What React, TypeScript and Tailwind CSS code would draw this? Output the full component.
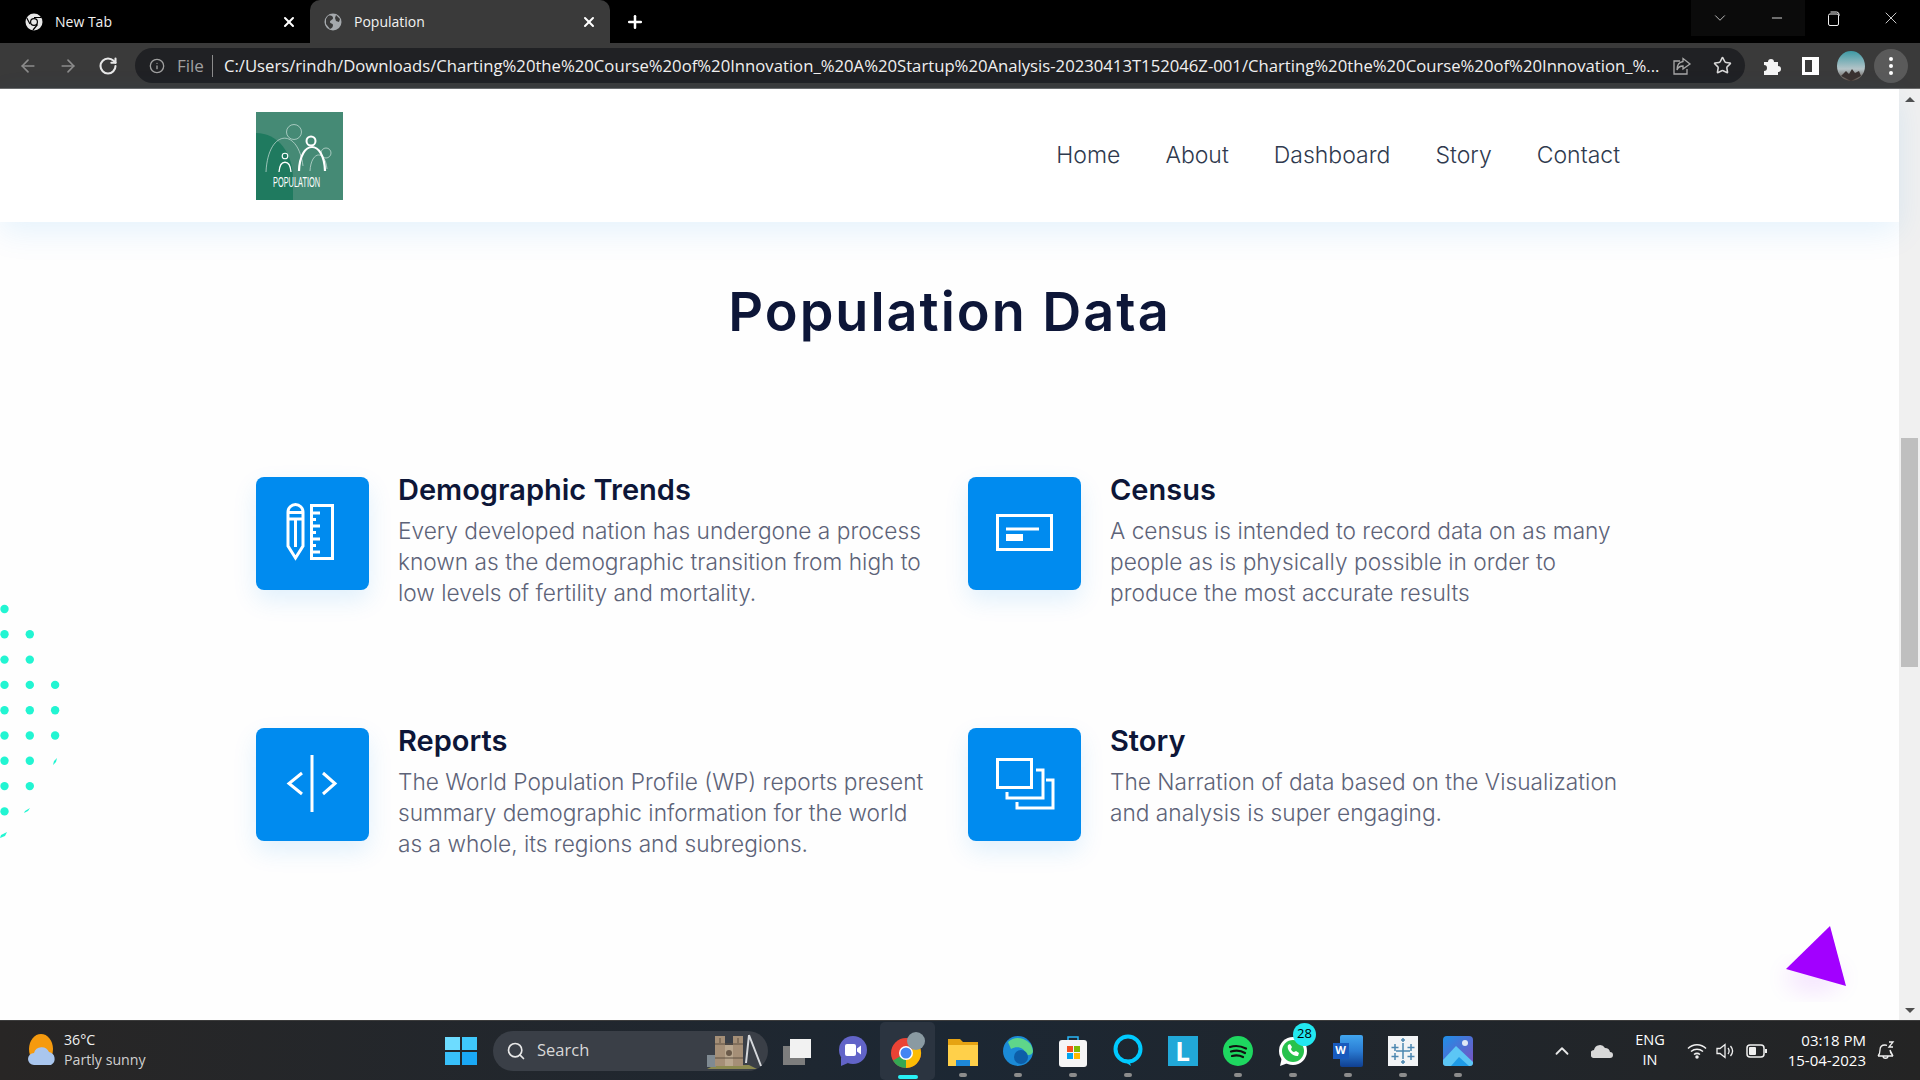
import { ArrowLeft, ArrowRight, RotateCw, Info, Star, X, Plus, Minus, ChevronDown, ChevronUp, Search } from "lucide-react";
import type { ReactNode } from "react";

const features = [
  {
    title: "Demographic Trends",
    lines: ["Every developed nation has undergone a process", "known as the demographic transition from high to", "low levels of fertility and mortality."],
    icon: (
      <>
        <path d="M32 35a7.500 7.500 0 0 1 15 0v34l-7.500 12L32 69z" />
        <path d="M32 35.500h15M32 42h15M39.500 42v28" />
        <rect x="55.500" y="28.500" width="21" height="53" />
        <path d="M55 36h9M55 42.500h5M55 49h9M55 55.500h5M55 62h9M55 68.500h5M55 75h9" />
      </>
    ),
  },
  {
    title: "Census",
    lines: ["A census is intended to record data on as many", "people as is physically possible in order to", "produce the most accurate results"],
    icon: (
      <>
        <rect x="29.500" y="38.500" width="54" height="34" />
        <path d="M38 52h33" />
        <path d="M38 60.500h17" strokeWidth="7" />
      </>
    ),
  },
  {
    title: "Reports",
    lines: ["The World Population Profile (WP) reports present", "summary demographic information for the world", "as a whole, its regions and subregions."],
    icon: <path d="M56 27v57M46 45 33 55.500l13 10.500M67 45l12 10.500L67 66" />,
  },
  {
    title: "Story",
    lines: ["The Narration of data based on the Visualization", "and analysis is super engaging."],
    icon: (
      <>
        <rect x="29.500" y="31.500" width="34" height="28" />
        <path d="M68 42h7v28H39v-6M78 52h7v28H49v-6" />
      </>
    ),
  },
];

function TitleBar() {
  return (
    <div className="flex h-[43px] items-center bg-black">
      <div className="flex h-full w-[310px] items-center pl-[25px] pr-[13px]">
        <svg width="18" height="18" viewBox="0 0 18 18">
          <circle cx="9" cy="9" r="8.500" fill="#e8e8e8" />
          <circle cx="9" cy="9" r="4" fill="#000" />
          <circle cx="9" cy="9" r="2.800" fill="#e8e8e8" />
          <path d="M9 4.500h7M5 11 1.800 5M12.500 11.500 8 17" stroke="#000" strokeWidth="1.200" />
        </svg>
        <span className="ml-[12px] flex-1 text-[14px] text-[#f2f2f2]">New Tab</span>
        <X size={16} strokeWidth={3} className="text-white" />
      </div>
      <div className="flex h-full w-[300px] items-center rounded-t-[10px] bg-[#3a3a3a] pl-[14px] pr-[13px]">
        <svg width="18" height="18" viewBox="0 0 18 18">
          <circle cx="9" cy="9" r="8.500" fill="#a5a9ad" />
          <path d="M4 3c3-1 5 0 5 2S6 7 6 9s3 1 3 3-1 3-3 4L2 11 2 6zM12 2l4 4-1 3-3-1-1-3z" fill="#3a3a3a" />
        </svg>
        <span className="ml-[12px] flex-1 text-[14px] text-[#f2f2f2]">Population</span>
        <X size={16} strokeWidth={3} className="text-white" />
      </div>
      <Plus size={20} strokeWidth={3} className="ml-[15px] text-white" />
      <div className="ml-auto flex h-[36px] self-start text-[#f0f0f0]">
        <div className="flex w-[57px] items-center justify-center bg-[#0b0b0b]"><ChevronDown size={18} strokeWidth={1} /></div>
        <div className="flex w-[57px] items-center justify-center bg-[#0b0b0b]"><Minus size={16} strokeWidth={1.300} /></div>
        <div className="flex w-[57px] items-center justify-center">
          <svg width="13" height="15" viewBox="0 0 13 15" fill="none" stroke="#f0f0f0">
            <rect x="1.500" y="3" width="10" height="11.500" rx="1.500" />
            <path d="M3.500 1h6a2.500 2.500 0 0 1 2.500 2v2" />
          </svg>
        </div>
        <div className="flex w-[58px] items-center justify-center"><X size={20} strokeWidth={1} /></div>
      </div>
    </div>
  );
}

function ToolBar() {
  return (
    <div className="flex h-[46px] items-center border-b border-[#6b6b6b] bg-[#3a3a3a] pl-[18px]">
      <ArrowLeft size={20} className="shrink-0 text-[#8c8c8c]" />
      <ArrowRight size={20} className="ml-[20px] shrink-0 text-[#8c8c8c]" />
      <RotateCw size={20} strokeWidth={2.500} className="ml-[20px] shrink-0 text-[#e8e8e8]" />
      <div className="ml-[17px] flex h-[35px] w-[1610px] shrink-0 items-center rounded-full bg-[#202124] pl-[14px] pr-[13px]">
        <Info size={16} className="shrink-0 text-[#a0a0a0]" />
        <span className="ml-[12px] text-[17px] text-[#a0a0a0]">File</span>
        <span className="ml-[8px] h-[22px] w-px shrink-0 bg-[#8c8c8c]" />
        <span className="ml-[11px] min-w-0 flex-1 whitespace-nowrap text-[16.700px] text-[#f0f0f0]">
          C:/Users/rindh/Downloads/Charting%20the%20Course%20of%20Innovation_%20A%20Startup%20Analysis-20230413T152046Z-001/Charting%20the%20Course%20of%20Innovation_%...
        </span>
        <svg width="20" height="20" viewBox="0 0 20 20" fill="none" stroke="#a8a8a8" strokeWidth="1.300" className="shrink-0">
          <path d="M8 5H2v13h13v-5" />
          <path d="M11 2.500 18 8l-7 5v-3c-3 0-5 1-6 4 0-5 2-8 6-8.500z" />
        </svg>
        <Star size={19} strokeWidth={2} className="ml-[21px] shrink-0 text-[#d8d8d8]" />
      </div>
      <svg width="20" height="20" viewBox="0 0 20 20" fill="#f5f5f5" className="ml-[17px] shrink-0">
        <path d="M2 6h4a3 3 0 0 1 6 0h4v4a3 3 0 0 1 0 6v3H2v-4a3 3 0 0 0 0-6z" />
      </svg>
      <div className="ml-[20px] h-[18px] w-[17px] shrink-0 border-[3px] border-r-[7px] border-white" />
      <svg width="28" height="30" viewBox="0 0 28 30" className="ml-[18px] shrink-0">
        <defs>
          <linearGradient id="sky" x1="0" y1="0" x2="0" y2="1">
            <stop offset="0" stopColor="#3d9aa5" />
            <stop offset="0.6" stopColor="#b5c4c8" />
            <stop offset="1" stopColor="#5a4a40" />
          </linearGradient>
        </defs>
        <ellipse cx="14" cy="15" rx="14" ry="15" fill="url(#sky)" />
        <path d="M4 25l5-5 3 3 3-5 3 4 4-2 2 5-10 5z" fill="#3a3230" />
      </svg>
      <div className="ml-[9px] flex h-[34px] w-[34px] shrink-0 flex-col items-center justify-center gap-[3px] rounded-full bg-[#5a5a5a]">
        <span className="h-[4px] w-[4px] rounded-full bg-white" />
        <span className="h-[4px] w-[4px] rounded-full bg-white" />
        <span className="h-[4px] w-[4px] rounded-full bg-white" />
      </div>
    </div>
  );
}

function Logo() {
  return (
    <svg width="87" height="88" viewBox="0 0 87 88" className="block">
      <rect width="87" height="88" fill="#458a75" />
      <path d="M0 21c22 0 37 20 37 46v21H0z" fill="#1f7a5f" />
      <g fill="none" stroke="#cfe3dc" strokeWidth="0.700">
        <path d="M10 60C12 17 42 15 47 54" />
        <circle cx="38" cy="20" r="7.500" />
        <path d="M54 59c1-20 15-22 17-2" />
        <circle cx="70" cy="41" r="5" />
      </g>
      <g fill="none" stroke="#fff">
        <path d="M43 59C44 27 68 27 69 59" strokeWidth="2.200" />
        <circle cx="55" cy="29" r="4.500" strokeWidth="2" />
        <path d="M23 60c1-13 11-13 12 0" strokeWidth="1.300" />
        <circle cx="29" cy="44" r="2.800" strokeWidth="1.100" />
      </g>
      <text transform="translate(17 75) scale(1 1.800)" textLength="47" lengthAdjust="spacingAndGlyphs" fill="#fff" fontSize="8" fontFamily="'Liberation Sans', sans-serif">POPULATION</text>
    </svg>
  );
}

function Header() {
  return (
    <header className="relative flex h-[133px] items-center justify-between bg-white pl-[256px] pr-[279px] shadow-[0_10px_30px_rgba(0,136,238,0.1)]">
      <Logo />
      <nav className="flex gap-[45px] text-[23px] font-light text-[#2f3a4e]">
        <span>Home</span>
        <span>About</span>
        <span>Dashboard</span>
        <span>Story</span>
        <span>Contact</span>
      </nav>
    </header>
  );
}

function Feature({ title, lines, icon }: { title: string; lines: string[]; icon: ReactNode }) {
  return (
    <div className="flex gap-[29.500px]">
      <div className="h-[113px] w-[112.500px] shrink-0 rounded-[8px] bg-[#008bef] shadow-[0_10px_25px_rgba(0,136,238,0.12)]">
        <svg viewBox="0 0 113 113" width="113" height="113" fill="none" stroke="#fff" strokeWidth="3">
          {icon}
        </svg>
      </div>
      <div>
        <h3 className="mt-[-1px] text-[29px] font-semibold leading-[28px] text-[#0d1638]">{title}</h3>
        <p className="mt-[11px] text-[22.700px] font-light leading-[31px] text-[#5d6378]">
          {lines.map((l) => (
            <span key={l} className="block whitespace-nowrap">{l}</span>
          ))}
        </p>
      </div>
    </div>
  );
}

function Dots() {
  const rows = [
    [1, 0, 0], [1, 1, 0], [1, 1, 0], [1, 1, 1], [1, 1, 1], [1, 1, 1], [1, 1, 0], [1, 1, 0], [1, 0, 0],
  ];
  return (
    <svg width="70" height="250" className="absolute left-0 top-[511px]" fill="#22f5d2">
      {rows.map((r, y) =>
        r.map((on, x) => (on ? <circle key={`${x}-${y}`} cx={4.500 + x * 25.300} cy={9 + y * 25.300} r="4.200" /> : null))
      )}
      <path d="M57 158l-3 3-1 4 3-3zM30 208l-5 3-1 2 4-2zM7 232l-6 3-1 3 5-2z" />
    </svg>
  );
}

function Page() {
  return (
    <main className="relative min-w-0 flex-1 bg-[#fefefe]">
      <Header />
      <h1 className="flex h-[178px] items-center justify-center text-[54px] font-semibold tracking-[2px] text-[#0d1638]">Population Data</h1>
      <div className="mt-[77px] grid grid-cols-[712px_1fr] auto-rows-[251px] pl-[256px]">
        {features.map((f) => (
          <Feature key={f.title} {...f} />
        ))}
      </div>
      <Dots />
      <svg width="80" height="80" viewBox="0 0 80 80" className="absolute left-[1776px] top-[827px] overflow-visible">
        <defs>
          <filter id="glow" x="-50%" y="-50%" width="200%" height="200%"><feGaussianBlur stdDeviation="12" /></filter>
        </defs>
        <ellipse cx="38" cy="62" rx="28" ry="12" fill="#a200ff" opacity="0.12" filter="url(#glow)" />
        <path d="M10 53 54 10l16 60z" fill="#a200ff" />
      </svg>
    </main>
  );
}

function ScrollBar() {
  return (
    <div className="flex w-[21px] shrink-0 flex-col items-center bg-[#f0f0f0] pt-[8px]">
      <div className="h-0 w-0 border-x-[5px] border-b-[5px] border-x-transparent border-b-[#505050]" />
      <div className="mt-[336px] h-[229px] w-[17px] bg-[#bfbfbf]" />
      <div className="mt-auto mb-[7px] h-0 w-0 border-x-[5px] border-t-[5px] border-x-transparent border-t-[#505050]" />
    </div>
  );
}

function TaskIcon({ children, dot, active }: { children: ReactNode; dot?: boolean; active?: boolean }) {
  return (
    <div className={`relative flex h-[58px] w-[55px] items-center justify-center ${active ? "rounded-[5px] bg-[#2b3440]" : ""}`}>
      {children}
      {dot && <span className="absolute bottom-[3px] h-[4px] w-[8px] rounded-full bg-[#8c8c8c]" />}
      {active && <span className="absolute bottom-[1px] h-[4px] w-[20px] rounded-full bg-[#28f0f5]" />}
    </div>
  );
}

function Taskbar() {
  return (
    <footer className="flex h-[60px] shrink-0 items-center border-t border-[#3c3c3c] bg-gradient-to-r from-[#282625] via-[#1c2733] to-[#242424] font-['Open_Sans',sans-serif] text-white">
      <div className="flex w-[445px] items-center pl-[27px]">
        <svg width="30" height="34" viewBox="0 0 30 34">
          <ellipse cx="14" cy="15" rx="12" ry="15" fill="#f59a0e" />
          <path d="M7 31a6 6 0 0 1 0-12 8 8 0 0 1 15-1 7 7 0 0 1 2 13z" fill="#a9c6ee" />
        </svg>
        <div className="ml-[7px] mt-[-2px] text-[14.200px] leading-[20px] text-[#f0f0f0]">
          <div>36°C</div>
          <div className="text-[#d0d0d0]">Partly sunny</div>
        </div>
      </div>
      <div className="grid h-[28px] w-[32px] grid-cols-2 gap-[2px]">
        <span className="bg-[#6ddcff]" />
        <span className="bg-[#3fc8fb]" />
        <span className="bg-[#38c0fa]" />
        <span className="bg-[#1aa8f5]" />
      </div>
      <div className="ml-[16px] flex h-[40px] w-[275px] items-center rounded-full bg-[#3a3f47] pl-[13px] pr-[3px]">
        <Search size={20} className="text-[#e8e8e8]" />
        <span className="ml-[11px] flex-1 text-[16.500px] text-[#d8d8d8]">Search</span>
        <svg width="60" height="36" viewBox="0 0 60 36">
          <path d="M2 36l8-4h34l8 4z" fill="#8c8a50" />
          <rect x="2" y="22" width="9" height="12" fill="#7f8a92" />
          <rect x="10" y="3" width="10" height="30" fill="#a58f77" />
          <rect x="28" y="3" width="10" height="30" fill="#a58f77" />
          <rect x="20" y="12" width="8" height="21" fill="#b9a78f" />
          <circle cx="24" cy="20" r="3" fill="#6a5a4a" />
          <path d="M10 11h28M10 25h28M15 5v5M33 5v5" stroke="#5f5142" strokeWidth="1" />
          <path d="M44 2l12 31M44 2l-3 28" stroke="#d5d8dc" strokeWidth="2" fill="none" />
        </svg>
      </div>
      <div className="ml-[2px] flex items-center">
        <TaskIcon>
          <svg width="30" height="30" viewBox="0 0 30 30">
            <rect x="0" y="10" width="22" height="19" fill="#7d7d7d" />
            <rect x="7" y="3" width="21" height="19" fill="#f2f2f2" />
          </svg>
        </TaskIcon>
        <TaskIcon>
          <svg width="30" height="32" viewBox="0 0 30 32">
            <circle cx="15" cy="15" r="14" fill="#6264c8" />
            <path d="M3 22v9l7-3z" fill="#6264c8" />
            <rect x="7" y="9" width="11" height="12" rx="2" fill="#fff" />
            <path d="M19 13.500l4-3v9l-4-3z" fill="#fff" />
          </svg>
        </TaskIcon>
        <TaskIcon active>
          <svg width="34" height="38" viewBox="0 0 34 38">
            <circle cx="15" cy="21" r="15" fill="#ea4335" />
            <path d="M15 21 2 28.500A15 15 0 0 0 15 36z" fill="#34a853" />
            <path d="M15 21V36A15 15 0 0 0 28 13.500z" fill="#fbbc05" />
            <circle cx="15" cy="21" r="7" fill="#fff" />
            <circle cx="15" cy="21" r="5.500" fill="#4285f4" />
            <circle cx="25" cy="9" r="9" fill="#8a9aa2" />
          </svg>
        </TaskIcon>
        <TaskIcon dot>
          <svg width="30" height="30" viewBox="0 0 30 30">
            <path d="M0 3h12l3 3h15v24H0z" fill="#e6a313" />
            <path d="M0 9h30v21H0z" fill="#ffd04a" />
            <rect x="8" y="24" width="14" height="6" fill="#1e88d8" />
          </svg>
        </TaskIcon>
        <TaskIcon dot>
          <svg width="30" height="30" viewBox="0 0 30 30">
            <circle cx="15" cy="15" r="15" fill="#1b8ad6" />
            <path d="M5 6a15 15 0 0 1 25 9c0 5-7 5-8 2 0-5-8-8-14-4z" fill="#5fd68a" />
            <circle cx="18" cy="21" r="7" fill="#0d5ea8" />
          </svg>
        </TaskIcon>
        <TaskIcon dot>
          <svg width="30" height="32" viewBox="0 0 30 32">
            <path d="M10 7V2h10v5" fill="none" stroke="#29b6f6" strokeWidth="1.500" />
            <rect x="1" y="5" width="28" height="27" rx="3" fill="#f5f5f5" />
            <rect x="9" y="11" width="6" height="6" fill="#f25022" />
            <rect x="16" y="11" width="6" height="6" fill="#7fba00" />
            <rect x="9" y="18" width="6" height="6" fill="#00a4ef" />
            <rect x="16" y="18" width="6" height="6" fill="#ffb900" />
          </svg>
        </TaskIcon>
        <TaskIcon dot>
          <svg width="30" height="34" viewBox="0 0 30 34" fill="none">
            <circle cx="15" cy="15" r="12.500" stroke="#00caff" strokeWidth="4" />
            <path d="M8 25l10 7 -2-6z" fill="#00caff" />
          </svg>
        </TaskIcon>
        <TaskIcon>
          <div className="flex h-[30px] w-[30px] items-center justify-center bg-[#21a8d8] text-[26px] font-bold leading-none text-white">L</div>
        </TaskIcon>
        <TaskIcon dot>
          <svg width="30" height="30" viewBox="0 0 30 30" fill="none">
            <circle cx="15" cy="15" r="15" fill="#1ed760" />
            <path d="M7 11c6-2 11-1 16 1.500M8 15.500c5-1.500 10-1 14 1.500M9 20c4-1 8-.5 11 1" stroke="#111" strokeWidth="2.200" strokeLinecap="round" />
          </svg>
        </TaskIcon>
        <TaskIcon dot>
          <svg width="30" height="32" viewBox="0 0 30 32">
            <circle cx="15" cy="16" r="14" fill="#fff" />
            <path d="M2 31l2-9 6 6z" fill="#fff" />
            <circle cx="15" cy="16" r="11" fill="#27c24c" />
            <path d="M10 10c-2 5 5 12 10 11l1-3-3-2-2 1c-1 0-3-2-3-3l1-2-2-3z" fill="#fff" />
          </svg>
          <span className="absolute right-[4px] top-[1px] flex h-[23px] w-[23px] items-center justify-center rounded-full bg-[#22e8f0] text-[13px] text-black">28</span>
        </TaskIcon>
        <TaskIcon dot>
          <div className="relative h-[32px] w-[30px]">
            <div className="ml-[7px] h-full w-[23px] rounded-[2px] bg-gradient-to-b from-[#41a5ee] via-[#2b7cd3] to-[#103f91]" />
            <div className="absolute left-0 top-[8px] flex h-[16px] w-[16px] items-center justify-center bg-[#185abd] text-[11px] font-bold">W</div>
          </div>
        </TaskIcon>
        <TaskIcon dot>
          <svg width="30" height="30" viewBox="0 0 30 30">
            <rect width="30" height="30" fill="#f2f4f6" />
            <path d="M15 7v16M8 15h14M7 8v7M3.500 11.500h7M23 8v7M19.500 11.500h7M7 17v7M3.500 20.500h7M23 17v7M19.500 20.500h7M15 2v4M13 4h4M15 24v4M13 26h4" stroke="#4b86b0" strokeWidth="1.500" />
          </svg>
        </TaskIcon>
        <TaskIcon dot>
          <svg width="30" height="30" viewBox="0 0 30 30">
            <defs>
              <linearGradient id="ph" x1="0" y1="0" x2="1" y2="1"><stop offset="0" stopColor="#1e90e8" /><stop offset="1" stopColor="#7d4fc0" /></linearGradient>
            </defs>
            <rect width="30" height="30" rx="4" fill="url(#ph)" />
            <circle cx="22" cy="7" r="3" fill="#dfe8f5" />
            <path d="M0 24 13 10l17 16v1a3 3 0 0 1-3 3H3a3 3 0 0 1-3-3z" fill="#5cc6f5" />
            <path d="M8 30l8-9 10 9z" fill="#1f9be6" />
          </svg>
        </TaskIcon>
      </div>
      <div className="ml-auto flex items-center pr-[25px]">
        <ChevronUp size={22} strokeWidth={2} className="text-[#e8e8e8]" />
        <svg width="22" height="14" viewBox="0 0 22 14" className="ml-[18px]">
          <path d="M4 14a4 4 0 0 1-1-8 6 6 0 0 1 11-2 5 5 0 0 1 5 4 3 3 0 0 1 0 6z" fill="#d8d8d8" />
        </svg>
        <div className="ml-[17px] mt-[-2px] w-[40px] text-center text-[14.500px] leading-[20px]">
          <div>ENG</div>
          <div>IN</div>
        </div>
        <svg width="20" height="16" viewBox="0 0 20 16" fill="none" stroke="#f0f0f0" strokeWidth="1.500" className="ml-[17px]">
          <path d="M1 5.500c5-5 13-5 18 0M4 8.500c3.500-3 8.500-3 12 0M7 11.500c2-1.500 4-1.500 6 0" />
          <circle cx="10" cy="14" r="1" fill="#f0f0f0" />
        </svg>
        <svg width="20" height="16" viewBox="0 0 20 16" fill="none" stroke="#f0f0f0" strokeWidth="1.300" className="ml-[9px]">
          <path d="M1 5.500h3L9 1.500v13l-5-4H1zM12 5c1.500 2 1.500 4 0 6M14.500 3c2.500 3 2.500 7 0 10" />
        </svg>
        <svg width="22" height="14" viewBox="0 0 22 14" className="ml-[10px]">
          <rect x="1" y="1" width="17" height="12" rx="3" fill="none" stroke="#f0f0f0" strokeWidth="1.500" />
          <rect x="3" y="3" width="7" height="8" rx="1" fill="#f0f0f0" />
          <rect x="19" y="5" width="2" height="4" fill="#f0f0f0" />
        </svg>
        <div className="ml-[8px] mt-[-2px] w-[90px] whitespace-nowrap text-right text-[15px] leading-[20px]">
          <div>03:18 PM</div>
          <div>15-04-2023</div>
        </div>
        <svg width="18" height="20" viewBox="0 0 18 20" fill="none" stroke="#f0f0f0" strokeWidth="1.300" className="ml-[11px]">
          <path d="M1 15c2-2 2-3 2-6 0-3 2-5 5-5 1 0 2 .3 2 .3M13 9c0 3 1 4 3 6zM1 15h15M6 15c0 3 5 3 5 0M12 1h4l-4 5h4" />
        </svg>
      </div>
    </footer>
  );
}

export default function App() {
  return (
    <div className="flex h-screen flex-col overflow-hidden bg-white font-['Inter',sans-serif]">
      <div className="font-['Open_Sans',sans-serif]">
        <TitleBar />
        <ToolBar />
      </div>
      <div className="flex min-h-0 flex-1">
        <Page />
        <ScrollBar />
      </div>
      <Taskbar />
    </div>
  );
}
